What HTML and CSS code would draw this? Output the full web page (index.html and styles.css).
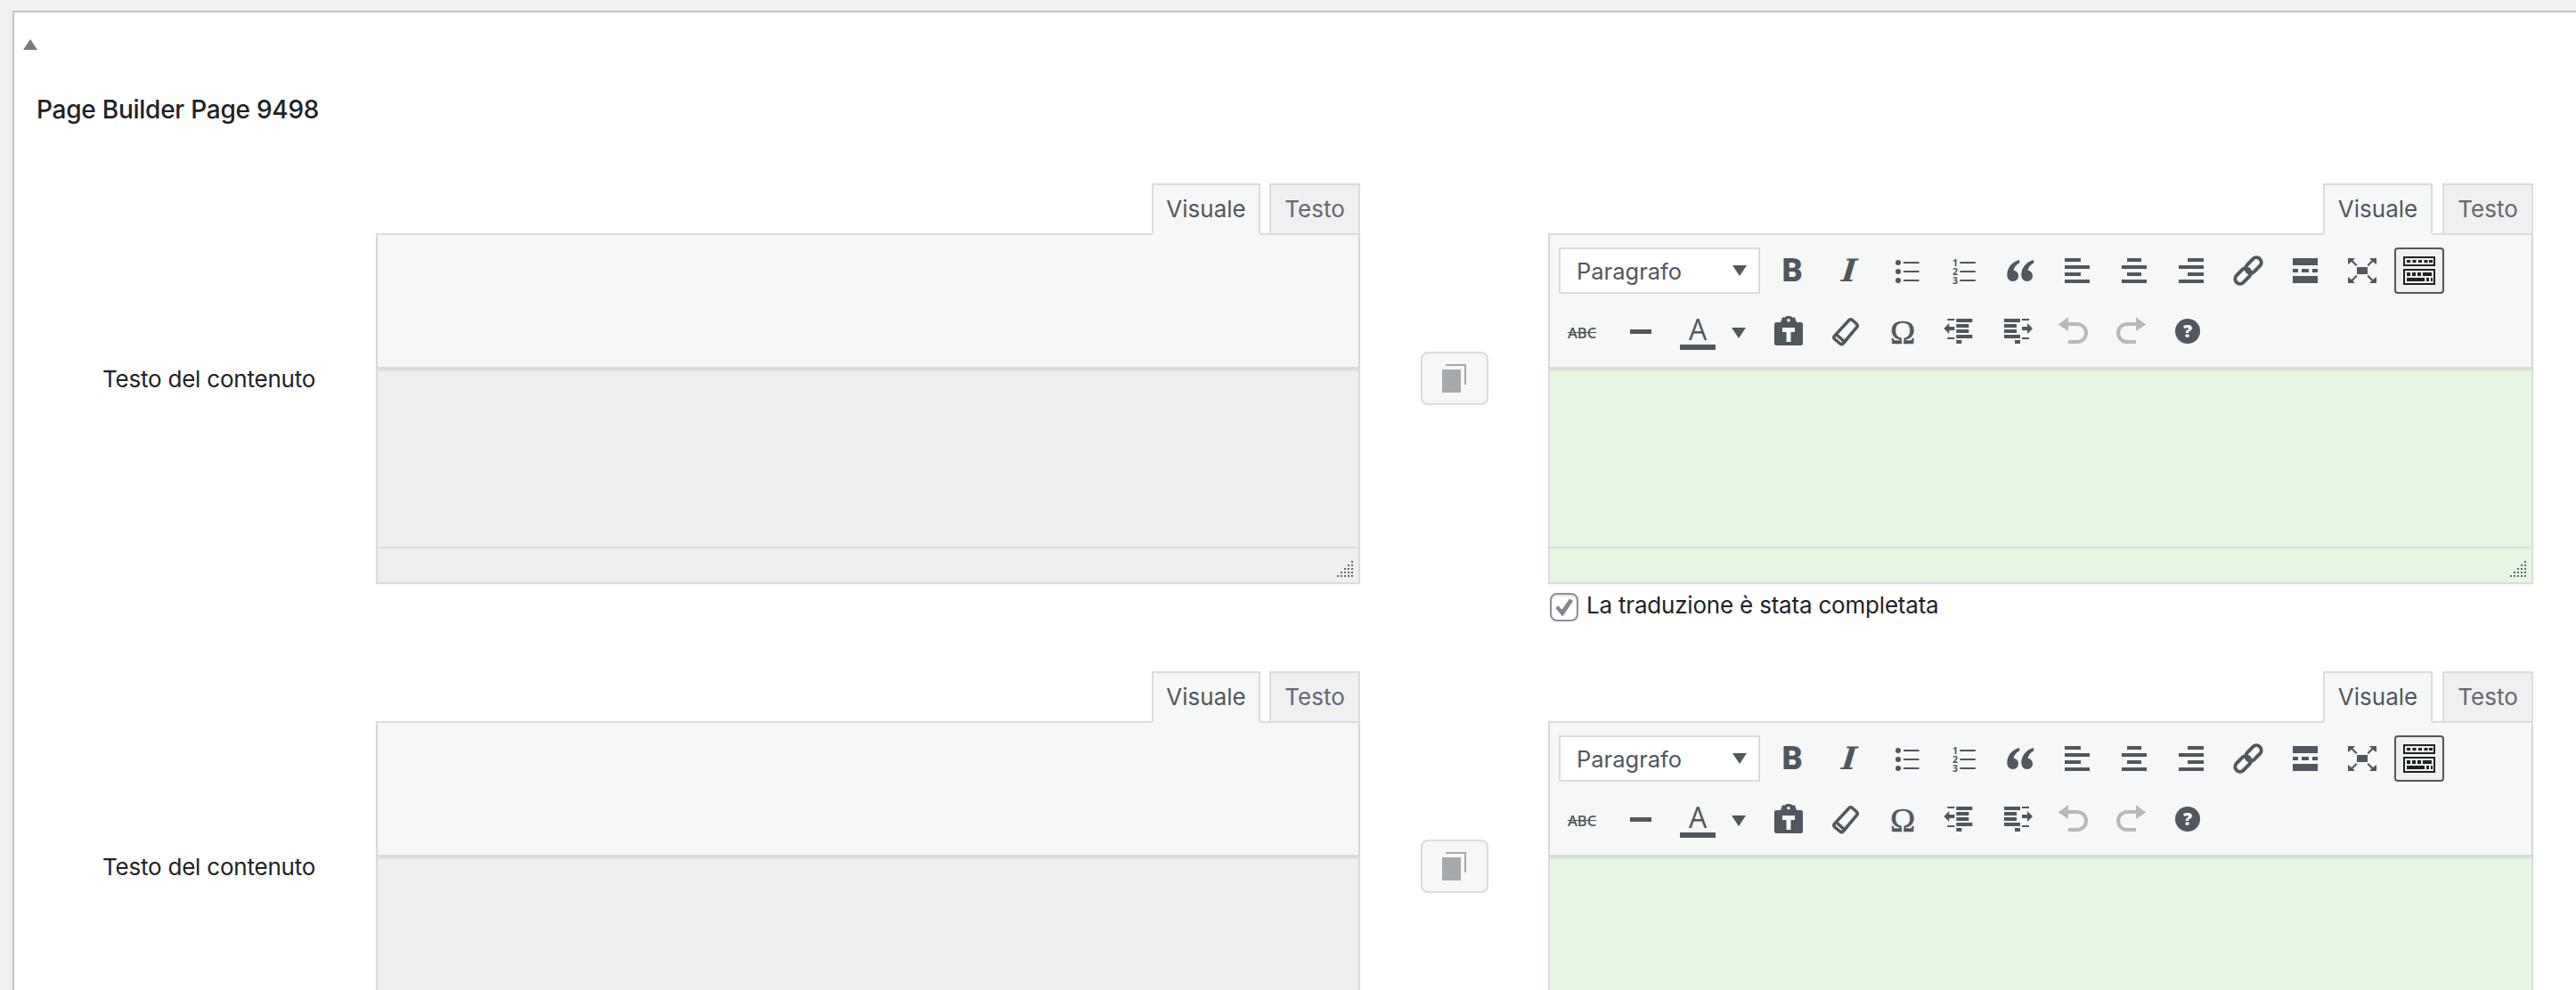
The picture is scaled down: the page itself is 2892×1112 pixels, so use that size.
FILE: index.html
```html
<!DOCTYPE html>
<html lang="it">
<head>
<meta charset="utf-8">
<title>Page Builder Page 9498</title>
<link rel="stylesheet" href="styles.css">
</head>
<body>
<svg class="defs" aria-hidden="true">
  <symbol id="i-ul" viewBox="0 0 40 40"><circle cx="11" cy="11" r="3"/><circle cx="11" cy="21" r="3"/><circle cx="11" cy="31" r="3"/><path d="M17 10h17.500v2H17zM17 20h17.500v2H17zM17 30h17.500v2H17z"/></symbol>
  <symbol id="i-quote" viewBox="0 0 40 40"><path d="M19 8C11 10 5.300 16.500 5.300 25c0 4.200 3 7 6.500 7 3.600 0 6.200-2.800 6.200-6.200 0-3.400-2.300-5.800-5.400-6.100C13.200 16 15.800 13 19.500 11z"/><path d="M35 8C27 10 21.300 16.500 21.300 25c0 4.200 3 7 6.500 7 3.600 0 6.200-2.800 6.200-6.200 0-3.400-2.300-5.800-5.400-6.100C29.200 16 31.800 13 35.500 11z"/></symbol>
  <symbol id="i-al" viewBox="0 0 40 40"><path d="M6 6h18v4H6zM6 14h28v4H6zM6 22h18v4H6zM6 30h28v4H6z"/></symbol>
  <symbol id="i-ac" viewBox="0 0 40 40"><path d="M12 6h16v4H12zM6 14h28v4H6zM12 22h16v4H12zM6 30h28v4H6z"/></symbol>
  <symbol id="i-ar" viewBox="0 0 40 40"><path d="M16 6h18v4H16zM6 14h28v4H6zM16 22h18v4H16zM6 30h28v4H6z"/></symbol>
  <symbol id="i-link" viewBox="0 0 40 40"><g class="ln"><rect x="4" y="20.500" width="20" height="11" rx="5.500" transform="rotate(-45 14 26)"/><rect x="16" y="8.500" width="20" height="11" rx="5.500" transform="rotate(-45 26 14)"/></g></symbol>
  <symbol id="i-more" viewBox="0 0 40 40"><path d="M6 6h28v8H6zM6 18h6v4H6zM16 18h8v4h-8zM28 18h6v4h-6zM6 26h28v8H6z"/></symbol>
  <symbol id="i-full" viewBox="0 0 40 40"><path d="M14 16h12v8H14z"/><path d="M4 6h8L9.500 8.500l5 5-1.500 1.500-5-5L4 13zM36 6h-8l2.500 2.500-5 5 1.500 1.500 5-5L36 13zM4 34h8l-2.500-2.500 5-5L13 25l-5 5L4 27zM36 34h-8l2.500-2.500-5-5L27 25l5 5L36 27z"/></symbol>
  <symbol id="i-kit" viewBox="0 0 40 40"><path class="dk" d="M2 4h36v11H2zm2 2v7h32V6zM2 18h36v18H2zm2 2v14h32V20z" fill-rule="evenodd"/><path class="dk" d="M6 8h4v3H6zM12.500 8h4v3h-4zM19 8h4v3h-4zM25.500 8h4v3h-4zM31 8h4v3h-4zM6 22h4v4H6zM12 22h4v4h-4zM18 22h4v4h-4zM24 22h10v4H24zM6 28h20v4H6zM28 28h3v4h-3zM33 28h2v4h-2z"/></symbol>
  <symbol id="i-hr" viewBox="0 0 40 40"><path d="M10 17h24v5H10z"/></symbol>
  <symbol id="i-paste" viewBox="0 0 40 40"><path fill-rule="evenodd" d="M13 3.500l3 0c.5-1 1.500-1.500 4-1.500s3.500.5 4 1.500h3l2 5.500h5c1 0 2 1 2 2v22c0 1-1 2-2 2H6c-1 0-2-1-2-2V11c0-1 1-2 2-2h5zM20 5a1.800 1.800 0 1 0 0 3.600A1.800 1.800 0 0 0 20 5zM13 15v5h4.500v11h5V20H27v-5z"/></symbol>
  <symbol id="i-erase" viewBox="0 0 40 40"><path class="ln3" d="M24 6.500q1.500-1.500 3.500 0l5 4.500q1.500 1.500 .2 3.500L17.500 32.500q-1.700 2-3.700.5l-6-5q-1.800-1.700-.3-3.700z"/><path class="ln3" d="M10 23l10 9"/></symbol>
  <symbol id="i-out" viewBox="0 0 40 40"><path d="M16.300 5h18v4h-18zM16.300 11h14v4h-14zM16.300 17h14v4h-14zM16.300 23h18v4h-18zM16.300 29h6v4h-6zM6.300 5h8v2h-8zM6.300 26h8v2h-8zM2.300 16l6-6v4h6v4h-6v4z"/></symbol>
  <symbol id="i-ind" viewBox="0 0 40 40"><path d="M6 5h18v4H6zM6 11h14v4H6zM6 17h14v4H6zM6 23h18v4H6zM18 29h6v4h-6zM26 5h8v2h-8zM26 26h8v2h-8zM38 16l-6-6v4h-6v4h6v4z"/></symbol>
  <symbol id="i-undo" viewBox="0 0 40 40"><path d="M2.700 11.500L14 3.300V19z"/><path class="ln4" d="M12 11h12a10 10 0 0 1 0 20H14"/></symbol>
  <symbol id="i-redo" viewBox="0 0 40 40"><path d="M37.300 11.500L26 3.300V19z"/><path class="ln4" d="M28 11H16a10 10 0 0 0 0 20h10"/></symbol>
  <symbol id="grip" viewBox="0 0 18 18"><path d="M16 0h2v2h-2zM12 4h2v2h-2zM16 4h2v2h-2zM8 8h2v2H8zM12 8h2v2h-2zM16 8h2v2h-2zM4 12h2v2H4zM8 12h2v2H8zM12 12h2v2h-2zM16 12h2v2h-2zM0 16h2v2H0zM4 16h2v2H4zM8 16h2v2H8zM12 16h2v2h-2zM16 16h2v2h-2z"/></symbol>
</svg>

<main class="postbox">
  <div class="toggle"><span class="tri"></span></div>
  <h2 class="title">Page Builder Page 9498</h2>

  <section class="field">
    <div class="label mid">Testo del contenuto</div>
    <div class="col-src">
      <div class="tabs"><span class="tab on">Visuale</span><span class="tab">Testo</span></div>
      <div class="editor">
        <div class="tb-empty"></div>
        <div class="area grey"></div>
        <div class="status grey"><svg class="grip"><use href="#grip"/></svg></div>
      </div>
    </div>
    <div class="mid copycell"><button class="copy" type="button"><span class="copy-back"></span><span class="copy-front"></span></button></div>
    <div class="col-dst">
      <div class="tabs"><span class="tab on">Visuale</span><span class="tab">Testo</span></div>
      <div class="editor">
        <div class="toolbar">
          <div class="tb-row">
            <div class="select"><span>Paragrafo</span><i class="caret"></i></div>
            <span class="btn"><b class="gl-b">B</b></span>
            <span class="btn"><b class="gl-i">I</b></span>
            <span class="btn"><svg class="ic"><use href="#i-ul"/></svg></span>
            <span class="btn"><svg class="ic" viewBox="0 0 40 40"><path d="M16.300 10h17.500v2H16.300zM16.300 20h17.500v2H16.300zM16.300 30h17.500v2H16.300z"/><text x="11" y="15" class="num">1</text><text x="11" y="25" class="num">2</text><text x="11" y="35" class="num">3</text></svg></span>
            <span class="btn"><svg class="ic"><use href="#i-quote"/></svg></span>
            <span class="btn"><svg class="ic"><use href="#i-al"/></svg></span>
            <span class="btn"><svg class="ic"><use href="#i-ac"/></svg></span>
            <span class="btn"><svg class="ic"><use href="#i-ar"/></svg></span>
            <span class="btn"><svg class="ic"><use href="#i-link"/></svg></span>
            <span class="btn"><svg class="ic"><use href="#i-more"/></svg></span>
            <span class="btn"><svg class="ic"><use href="#i-full"/></svg></span>
            <span class="btn active"><svg class="ic"><use href="#i-kit"/></svg></span>
          </div>
          <div class="tb-row">
            <span class="btn"><span class="gl-s">ABC</span></span>
            <span class="btn"><svg class="ic"><use href="#i-hr"/></svg></span>
            <span class="btn color"><span class="gl-a">A</span><i class="caret"></i></span>
            <span class="btn"><svg class="ic"><use href="#i-paste"/></svg></span>
            <span class="btn"><svg class="ic"><use href="#i-erase"/></svg></span>
            <span class="btn"><span class="gl-o">Ω</span></span>
            <span class="btn"><svg class="ic"><use href="#i-out"/></svg></span>
            <span class="btn"><svg class="ic"><use href="#i-ind"/></svg></span>
            <span class="btn off"><svg class="ic"><use href="#i-undo"/></svg></span>
            <span class="btn off"><svg class="ic"><use href="#i-redo"/></svg></span>
            <span class="btn"><svg class="ic" viewBox="0 0 40 40"><circle cx="20" cy="19" r="14"/><text x="20" y="26" class="q">?</text></svg></span>
          </div>
        </div>
        <div class="area green"></div>
        <div class="status green"><svg class="grip"><use href="#grip"/></svg></div>
      </div>
      <label class="done"><span class="check"><svg viewBox="0 0 32 32"><path d="M5 17l3.500-3 4.500 5L23 5l4.500 3L14 28z"/></svg></span>La traduzione è stata completata</label>
    </div>
  </section>

  <section class="field">
    <div class="label mid">Testo del contenuto</div>
    <div class="col-src">
      <div class="tabs"><span class="tab on">Visuale</span><span class="tab">Testo</span></div>
      <div class="editor">
        <div class="tb-empty"></div>
        <div class="area grey"></div>
        <div class="status grey"><svg class="grip"><use href="#grip"/></svg></div>
      </div>
    </div>
    <div class="mid copycell"><button class="copy" type="button"><span class="copy-back"></span><span class="copy-front"></span></button></div>
    <div class="col-dst">
      <div class="tabs"><span class="tab on">Visuale</span><span class="tab">Testo</span></div>
      <div class="editor">
        <div class="toolbar">
          <div class="tb-row">
            <div class="select"><span>Paragrafo</span><i class="caret"></i></div>
            <span class="btn"><b class="gl-b">B</b></span>
            <span class="btn"><b class="gl-i">I</b></span>
            <span class="btn"><svg class="ic"><use href="#i-ul"/></svg></span>
            <span class="btn"><svg class="ic" viewBox="0 0 40 40"><path d="M16.300 10h17.500v2H16.300zM16.300 20h17.500v2H16.300zM16.300 30h17.500v2H16.300z"/><text x="11" y="15" class="num">1</text><text x="11" y="25" class="num">2</text><text x="11" y="35" class="num">3</text></svg></span>
            <span class="btn"><svg class="ic"><use href="#i-quote"/></svg></span>
            <span class="btn"><svg class="ic"><use href="#i-al"/></svg></span>
            <span class="btn"><svg class="ic"><use href="#i-ac"/></svg></span>
            <span class="btn"><svg class="ic"><use href="#i-ar"/></svg></span>
            <span class="btn"><svg class="ic"><use href="#i-link"/></svg></span>
            <span class="btn"><svg class="ic"><use href="#i-more"/></svg></span>
            <span class="btn"><svg class="ic"><use href="#i-full"/></svg></span>
            <span class="btn active"><svg class="ic"><use href="#i-kit"/></svg></span>
          </div>
          <div class="tb-row">
            <span class="btn"><span class="gl-s">ABC</span></span>
            <span class="btn"><svg class="ic"><use href="#i-hr"/></svg></span>
            <span class="btn color"><span class="gl-a">A</span><i class="caret"></i></span>
            <span class="btn"><svg class="ic"><use href="#i-paste"/></svg></span>
            <span class="btn"><svg class="ic"><use href="#i-erase"/></svg></span>
            <span class="btn"><span class="gl-o">Ω</span></span>
            <span class="btn"><svg class="ic"><use href="#i-out"/></svg></span>
            <span class="btn"><svg class="ic"><use href="#i-ind"/></svg></span>
            <span class="btn off"><svg class="ic"><use href="#i-undo"/></svg></span>
            <span class="btn off"><svg class="ic"><use href="#i-redo"/></svg></span>
            <span class="btn"><svg class="ic" viewBox="0 0 40 40"><circle cx="20" cy="19" r="14"/><text x="20" y="26" class="q">?</text></svg></span>
          </div>
        </div>
        <div class="area green"></div>
        <div class="status green"><svg class="grip"><use href="#grip"/></svg></div>
      </div>
    </div>
  </section>
</main>
</body>
</html>
```

FILE: styles.css
```css
html, body {
  height: 100%;
  margin: 0;
  overflow: hidden;
}
body {
  background: #f0f0f1;
  color: #1d2327;
  font-family: Inter, "Liberation Sans", sans-serif;
  font-size: 26px;
}
.defs {
  position: absolute;
  width: 0;
  height: 0;
}
.num {
  font-family: "Open Sans", sans-serif;
  font-size: 10.500px;
  font-weight: 700;
  text-anchor: middle;
}
.q {
  fill: #f6f7f7;
  font-family: "Open Sans", sans-serif;
  font-size: 20px;
  font-weight: 800;
  text-anchor: middle;
}
.ln, .ln3, .ln4 {
  fill: none;
  stroke: currentColor;
}
.ln { stroke-width: 4; }
.ln3 { stroke-width: 3.500; }
.ln4 { stroke-width: 4; }
.dk { fill: #1d2327; }

.postbox {
  box-sizing: border-box;
  margin: 12px -40px 0 14px;
  min-height: 1200px;
  background: #fff;
  border: 2px solid #c3c4c7;
}
.toggle {
  padding: 30px 0 0 10px;
  height: 12px;
}
.tri {
  display: block;
  width: 0;
  height: 0;
  border-left: 8px solid transparent;
  border-right: 8px solid transparent;
  border-bottom: 12px solid #787c82;
}
.title {
  margin: 47px 0 63px 25px;
  font-size: 28px;
  font-weight: 500;
  letter-spacing: -.25px;
  line-height: 40px;
}

.field {
  display: grid;
  grid-template-columns: 406px 1105px 211px 1106px;
  align-items: start;
  margin-bottom: 56px;
}
.mid {
  display: flex;
  align-items: center;
  height: 438px;
}
.label {
  padding: 2px 0 0 99px;
  box-sizing: border-box;
  letter-spacing: -.22px;
  line-height: 36px;
}
.copycell { justify-content: center; }
.copy {
  position: relative;
  box-sizing: border-box;
  width: 76px;
  height: 60px;
  padding: 0;
  background: #f6f7f7;
  border: 2px solid #dcdcde;
  border-radius: 8px;
}
.copy-front {
  position: absolute;
  left: 22px;
  top: 18px;
  width: 21px;
  height: 26px;
  background: #a7aaad;
}
.copy-back {
  position: absolute;
  left: 26px;
  top: 12px;
  width: 21px;
  height: 21px;
  border-top: 2px solid #a7aaad;
  border-right: 2px solid #a7aaad;
}

.tabs {
  display: flex;
  justify-content: flex-end;
  gap: 10px;
  height: 56px;
}
.col-dst .tabs { gap: 11px; }
.tab {
  box-sizing: border-box;
  width: 102px;
  height: 58px;
  background: #f0f0f1;
  border: 2px solid #dcdcde;
  color: #646970;
  line-height: 54px;
  text-align: center;
  position: relative;
  z-index: 1;
}
.tab.on {
  width: 122px;
  background: #f6f7f7;
  border-bottom-color: #f6f7f7;
  color: #50575e;
}
.col-dst .tab.on { width: 123px; }
.editor {
  box-sizing: border-box;
  height: 394px;
  display: flex;
  flex-direction: column;
  border: 2px solid #dcdcde;
  box-shadow: 0 2px 3px rgba(0, 0, 0, .04);
}
.tb-empty, .toolbar {
  box-sizing: border-box;
  height: 150px;
  flex: none;
  background: #f6f7f7;
  border-bottom: 2px solid #dcdcde;
  box-shadow: 0 2px 2px rgba(0, 0, 0, .1);
  position: relative;
}
.toolbar {
  display: flex;
  flex-direction: column;
  gap: 17px;
  padding: 14px 4px 0;
  color: #50575e;
  fill: #50575e;
}
.tb-row {
  display: flex;
  height: 52px;
}
.select {
  box-sizing: border-box;
  width: 226px;
  height: 52px;
  margin: 0 4px 0 6px;
  padding: 0 13px 0 18px;
  display: flex;
  align-items: center;
  justify-content: space-between;
  background: #fff;
  border: 2px solid #dcdcde;
  color: #50575e;
  font-size: 25.500px;
}
.caret {
  width: 0;
  height: 0;
  border-left: 8px solid transparent;
  border-right: 8px solid transparent;
  border-top: 12px solid #50575e;
}
.btn {
  box-sizing: border-box;
  width: 56px;
  height: 52px;
  margin: 0 4px;
  flex: none;
  display: flex;
  align-items: center;
  justify-content: center;
}
.btn.active {
  background: #f0f0f1;
  border: 2px solid #50575e;
  border-radius: 4px;
}
.btn.off {
  color: #b6b9bc;
  fill: #b6b9bc;
}
.btn.color {
  position: relative;
  width: 96px;
  justify-content: flex-start;
}
.btn.color .caret {
  position: absolute;
  left: 68px;
  top: 21px;
}
.ic {
  width: 40px;
  height: 40px;
  flex: none;
  display: block;
}
.gl-b {
  font-family: Roboto, sans-serif;
  font-size: 36px;
  font-weight: 900;
  line-height: 54px;
}
.gl-i {
  display: inline-block;
  font-family: "DejaVu Serif", serif;
  font-size: 35px;
  font-style: italic;
  font-weight: 700;
  line-height: 52px;
  transform: skewX(-6deg);
}
.gl-s {
  font-family: "Open Sans", sans-serif;
  font-size: 16.500px;
  font-weight: 600;
  text-decoration: line-through;
}
.gl-a {
  box-sizing: border-box;
  width: 40px;
  height: 39px;
  margin: 0 0 0 10px;
  border-bottom: 6px solid #50575e;
  font-family: "Open Sans", sans-serif;
  font-size: 32px;
  line-height: 31px;
  text-align: center;
}
.gl-o {
  font-family: "Liberation Serif", serif;
  font-size: 38px;
  line-height: 52px;
  -webkit-text-stroke: .5px #50575e;
}
.area {
  flex: 1;
}
.status {
  position: relative;
  flex: none;
  height: 38px;
  border-top: 2px solid #dcdcde;
}
.grey { background: #eeeeee; }
.green { background: #e7f6e3; }
.grip {
  position: absolute;
  right: 6px;
  bottom: 6px;
  width: 18px;
  height: 18px;
  fill: #666;
}
.done {
  display: flex;
  align-items: flex-start;
  gap: 9px;
  height: 32px;
  margin-top: 10px;
  padding-left: 2px;
  color: #1d2327;
  letter-spacing: -.2px;
  line-height: 28px;
}
.check {
  box-sizing: border-box;
  width: 32px;
  height: 32px;
  background: #fff;
  border: 2px solid #8c8f94;
  border-radius: 8px;
  box-shadow: inset 0 2px 3px rgba(0, 0, 0, .1);
}
.check svg {
  display: block;
  width: 28px;
  height: 28px;
  fill: #7e8993;
}
```
